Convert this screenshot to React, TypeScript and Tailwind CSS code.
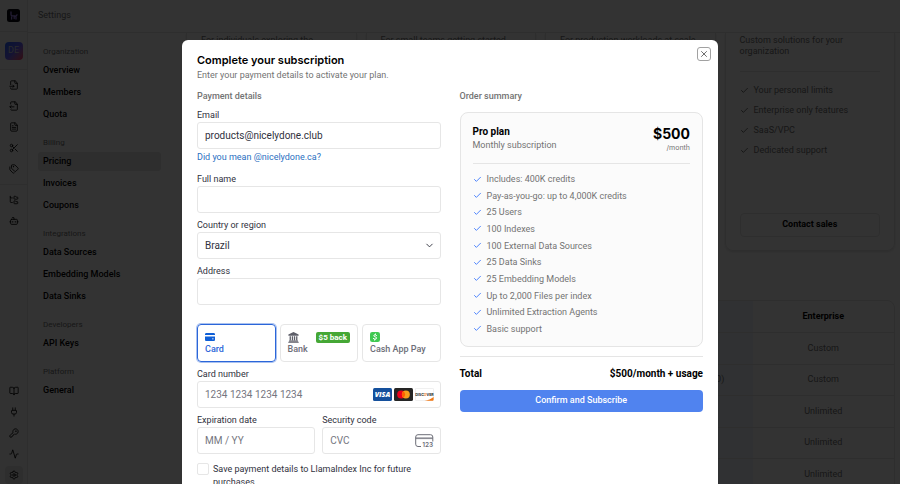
import type { ReactNode } from "react";
import {
  Activity,
  BookOpen,
  Bot,
  Check,
  ChevronDown,
  FileInput,
  FileOutput,
  FileText,
  FolderTree,
  KeyRound,
  Plug,
  Scissors,
  Settings,
  Tags,
  X,
} from "lucide-react";
import type { LucideIcon } from "lucide-react";

const railGroups: { name: string; icon: LucideIcon }[][] = [
  [
    { name: "Parse", icon: FileInput },
    { name: "Extract", icon: FileOutput },
    { name: "Classify", icon: FileText },
    { name: "Split", icon: Scissors },
    { name: "Tags", icon: Tags },
  ],
  [
    { name: "Index", icon: FolderTree },
    { name: "Agents", icon: Bot },
  ],
];

const railBottom: { name: string; icon: LucideIcon }[] = [
  { name: "Docs", icon: BookOpen },
  { name: "Integrations", icon: Plug },
  { name: "API keys", icon: KeyRound },
  { name: "Usage", icon: Activity },
  { name: "Settings", icon: Settings },
];

const menu = [
  { title: "Organization", items: ["Overview", "Members", "Quota"] },
  { title: "Billing", items: ["Pricing", "Invoices", "Coupons"] },
  { title: "Integrations", items: ["Data Sources", "Embedding Models", "Data Sinks"] },
  { title: "Developers", items: ["API Keys"] },
  { title: "Platform", items: ["General"] },
];

const plans = [
  { text: "For individuals exploring the platform", features: [] },
  { text: "For small teams getting started", features: [] },
  { text: "For production workloads at scale", features: [] },
  {
    text: "Custom solutions for your organization",
    features: ["Your personal limits", "Enterprise only features", "SaaS/VPC", "Dedicated support"],
  },
];

const compareRows = [
  ["", "Custom"],
  ["Pay-as-you-go ($500)", "Custom"],
  ["", "Unlimited"],
  ["", "Unlimited"],
  ["", "Unlimited"],
];

const orderFeatures = [
  "Includes: 400K credits",
  "Pay-as-you-go: up to 4,000K credits",
  "25 Users",
  "100 Indexes",
  "100 External Data Sources",
  "25 Data Sinks",
  "25 Embedding Models",
  "Up to 2,000 Files per index",
  "Unlimited Extraction Agents",
  "Basic support",
];

const inputClass =
  "block h-[27px] w-full rounded-[3px] border border-[#e6e6e6] bg-white px-[7px] text-[10px] text-[#30313d] placeholder:text-[#757680] outline-none";

const methodClass = "flex h-[38px] flex-col items-start rounded-[4px] border px-[7px] pt-[6px]";

const RailButton = ({ name, icon: Icon, active }: { name: string; icon: LucideIcon; active?: boolean }) => (
  <button
    aria-label={name}
    className={`flex h-[18px] w-[18px] items-center justify-center rounded-sm ${active ? "bg-neutral-200" : ""}`}
  >
    <Icon className="h-[10px] w-[10px]" strokeWidth={2} />
  </button>
);

const Rail = () => (
  <aside className="flex w-7 shrink-0 flex-col items-center border-r border-neutral-200 bg-neutral-50">
    <div className="flex h-8 w-full shrink-0 items-center justify-center border-b border-neutral-200">
      <svg viewBox="0 0 13 13" className="h-[13px] w-[13px]">
        <rect width="13" height="13" rx="2.5" fill="#05050f" />
        <path
          d="M4 3v2.6c0 .8.4 1.2 1.2 1.2h2.6c.8 0 1.2.4 1.2 1.2v2M4.6 6.5V10M7.2 7v2.6M8.8 7.4 10 5.8"
          fill="none"
          stroke="#a78bfa"
          strokeWidth="1.3"
          strokeLinecap="round"
        />
      </svg>
    </div>
    <div className="flex h-[38px] w-full shrink-0 items-center justify-center border-b border-neutral-200">
      <div className="flex h-[18px] w-[18px] items-center justify-center rounded bg-linear-to-br from-blue-600 via-indigo-500 to-rose-500 text-[9px] text-neutral-300">
        DE
      </div>
    </div>
    {railGroups.map((group, i) => (
      <div key={i} className={`flex w-full flex-col items-center gap-[3px] py-[6px] ${i === 0 ? "border-b border-neutral-200" : ""}`}>
        {group.map((item) => (
          <RailButton key={item.name} {...item} />
        ))}
      </div>
    ))}
    <nav className="mt-auto flex flex-col gap-[3px]">
      {railBottom.map((item) => (
        <RailButton key={item.name} {...item} active={item.name === "Settings"} />
      ))}
    </nav>
  </aside>
);

const SettingsMenu = () => (
  <nav className="flex w-[143px] shrink-0 flex-col gap-[11px] px-[10px] pt-[11px]">
    {menu.map((section) => (
      <div key={section.title}>
        <h3 className="h-[17px] px-[5px] text-[8px] leading-4 text-neutral-500">{section.title}</h3>
        <ul className="grid gap-[3px]">
          {section.items.map((item) => (
            <li key={item}>
              <a
                href="#"
                className={`block h-[19px] w-[123px] rounded-[3px] px-[5px] text-[9px] leading-[19px] font-medium ${
                  item === "Pricing" ? "bg-neutral-200" : ""
                }`}
              >
                {item}
              </a>
            </li>
          ))}
        </ul>
      </div>
    ))}
  </nav>
);

const PricingPage = () => (
  <main className="flex min-w-0 flex-1 flex-col gap-[49px] overflow-hidden pr-[5px] pl-[15px]">
    <div className="grid shrink-0 grid-cols-4 gap-[9px]">
      {plans.map((plan) => (
        <section
          key={plan.text}
          className="flex h-[218px] flex-col rounded-b-lg border border-t-0 border-neutral-200 px-[14px] pt-[2px] pb-[13px] shadow-sm"
        >
          <p className="h-[23px] text-[9px] leading-[11px] text-neutral-500">{plan.text}</p>
          <hr className="mt-[13px] border-neutral-200" />
          <ul className="mt-[12px] grid gap-2">
            {plan.features.map((feature) => (
              <li key={feature} className="flex h-3 items-center gap-[5px] text-[9px] leading-3 text-neutral-500">
                <Check className="h-[9px] w-[9px] text-neutral-700" />
                {feature}
              </li>
            ))}
          </ul>
          {plan.features.length > 0 && (
            <button className="mt-auto h-6 rounded-[4px] border border-neutral-200 text-[9px] font-bold">
              Contact sales
            </button>
          )}
        </section>
      ))}
    </div>
    <div className="shrink-0 rounded-lg border border-neutral-200">
      <table className="h-[190px] w-full table-fixed text-center text-[9px] text-neutral-500">
        <tbody>
          <tr className="h-[31px] border-b border-neutral-200 text-black">
            <td />
            <td />
            <td />
            <td className="bg-blue-50" />
            <th scope="col" className="font-bold">
              Enterprise
            </th>
          </tr>
          {compareRows.map(([pro, enterprise], i) => (
            <tr key={i} className="h-[31px] border-b border-neutral-200">
              <td />
              <td />
              <td />
              <td className="bg-blue-50">{pro}</td>
              <td>{enterprise}</td>
            </tr>
          ))}
        </tbody>
      </table>
    </div>
  </main>
);

const Field = ({ id, label, children }: { id: string; label: string; children: ReactNode }) => (
  <div className="min-w-0">
    <label htmlFor={id} className="mb-px block text-[9px] leading-3 text-[#30313d]">
      {label}
    </label>
    <div className="relative">{children}</div>
  </div>
);

const CardIcon = () => (
  <svg viewBox="0 0 10 8" className="h-2 w-[10px]">
    <path d="M0 1.3C0 .6.6 0 1.3 0h7.4C9.4 0 10 .6 10 1.3V2H0zM0 3.4h10v3.3C10 7.4 9.4 8 8.7 8H1.3C.6 8 0 7.4 0 6.7z" fill="#0f5fd7" />
    <path d="M7 5.4h1.6v.8H7z" fill="#fff" />
  </svg>
);

const BankIcon = () => (
  <svg viewBox="0 0 11 11" className="h-[11px] w-[11px]" fill="#5d5e68">
    <path d="M5.5 0 10.6 2.6v1.2H.4V2.6z" />
    <path d="M1.6 4.3h1.3v4H1.6zM3.8 4.3h1.3v4H3.8zM5.9 4.3h1.3v4H5.9zM8.1 4.3h1.3v4H8.1zM1 8.6h9v.8H1zM.3 9.7h10.4v1H.3z" />
  </svg>
);

const CashIcon = () => (
  <svg viewBox="0 0 10 10" className="h-[10px] w-[10px]">
    <rect width="10" height="10" rx="2.2" fill="#3fc951" />
    <path
      d="M6.6 3.5C6.1 3 5.6 2.8 5.1 2.8c-.8 0-1.3.4-1.3.9 0 1.4 2.8.9 2.8 2.3 0 .7-.7 1.200-1.500 1.200-.7 0-1.300-.3-1.800-.8M5.400 1.900l-.2.9M4.900 7.300l-.2.9"
      fill="none"
      stroke="#fff"
      strokeWidth="1"
      strokeLinecap="round"
    />
  </svg>
);

const CardBrands = () => (
  <div className="pointer-events-none absolute inset-y-0 right-[7px] flex items-center gap-[2px]">
    <svg viewBox="0 0 24 16" className="h-[13px] w-[19px]" preserveAspectRatio="none">
      <rect width="24" height="16" rx="2" fill="#15509c" />
      <text x="12" y="11.2" textAnchor="middle" fontSize="9" fontWeight="800" fontStyle="italic" fontFamily="Open Sans, sans-serif" fill="#fff">
        VISA
      </text>
    </svg>
    <svg viewBox="0 0 24 16" className="h-[13px] w-[19px]" preserveAspectRatio="none">
      <rect width="24" height="16" rx="2" fill="#252525" />
      <circle cx="9" cy="8" r="5" fill="#eb001b" />
      <circle cx="15" cy="8" r="5" fill="#f79e1b" />
      <path d="M12 4a5 5 0 0 1 0 8 5 5 0 0 1 0-8z" fill="#ff5f00" />
    </svg>
    <svg viewBox="0 0 24 16" className="h-[13px] w-[19px]" preserveAspectRatio="none">
      <rect x=".4" y=".4" width="23.2" height="15.2" rx="1.6" fill="#fff" stroke="#e3e3e3" strokeWidth=".8" />
      <path d="M23.5 11V14c0 1-.6 1.6-1.6 1.6H12C16.5 15 20.500 13.400 23.500 11z" fill="#f27712" />
      <text x="12" y="9.3" textAnchor="middle" fontSize="4.5" fontWeight="700" fontFamily="Inter, sans-serif" fill="#201d1c">
        DISC<tspan fill="#f27712">O</tspan>VER
      </text>
    </svg>
  </div>
);

const CvcIcon = () => (
  <svg viewBox="0 0 19 14" className="pointer-events-none absolute top-[7px] right-[7px] h-[14px] w-[19px]">
    <path
      d="M6 12.5H3A2.3 2.3 0 0 1 .7 10.2V3A2.3 2.3 0 0 1 3 .7h12.5A2.3 2.3 0 0 1 17.800 3v4.500"
      fill="none"
      stroke="#6d6e78"
      strokeWidth="1"
    />
    <path d="M.7 3.4h17.1v1.7H.7z" fill="#6d6e78" opacity=".8" />
    <text x="7.3" y="13.2" fontSize="6.5" fontWeight="600" fontFamily="Inter, sans-serif" fill="#6d6e78">
      123
    </text>
  </svg>
);

const PaymentForm = () => (
  <form className="min-w-0">
    <h3 className="mb-[7px] text-[9px] leading-3 font-medium text-neutral-500">Payment details</h3>
    <Field id="email" label="Email">
      <input id="email" type="email" defaultValue="products@nicelydone.club" className={inputClass} />
    </Field>
    <a href="#" className="mt-[2px] mb-[10px] block text-[9px] leading-3 text-[#2b6fbf]">
      Did you mean @nicelydone.ca?
    </a>
    <div className="grid gap-[6px]">
      <Field id="name" label="Full name">
        <input id="name" className={inputClass} />
      </Field>
      <Field id="country" label="Country or region">
        <select id="country" className={`${inputClass} appearance-none`} defaultValue="Brazil">
          <option>Brazil</option>
        </select>
        <ChevronDown className="pointer-events-none absolute top-2 right-[6px] h-[11px] w-[11px] text-[#30313d]" />
      </Field>
      <Field id="address" label="Address">
        <input id="address" className={inputClass} />
      </Field>
    </div>
    <div className="mt-[19px] mb-[6px] grid grid-cols-3 gap-1 text-[9px] leading-3 font-medium text-[#6d6e78]">
      <button type="button" className={`${methodClass} border-[#2b66d9] text-[#2b66d9] ring-1 ring-[#2b66d9]/40`}>
        <span className="flex h-3 items-center">
          <CardIcon />
        </span>
        Card
      </button>
      <button type="button" className={`${methodClass} border-[#e6e6e6]`}>
        <span className="flex h-3 w-full items-center justify-between">
          <BankIcon />
          <span className="rounded-[2px] bg-[#45a735] px-[3px] text-[8px] leading-[11px] font-bold text-white">$5 back</span>
        </span>
        Bank
      </button>
      <button type="button" className={`${methodClass} border-[#e6e6e6]`}>
        <span className="flex h-3 items-center">
          <CashIcon />
        </span>
        Cash App Pay
      </button>
    </div>
    <div className="grid grid-cols-2 gap-x-[7px] gap-y-[6px]">
      <div className="col-span-2">
        <Field id="card" label="Card number">
          <input id="card" placeholder="1234 1234 1234 1234" className={inputClass} />
          <CardBrands />
        </Field>
      </div>
      <Field id="expiry" label="Expiration date">
        <input id="expiry" placeholder="MM / YY" className={inputClass} />
      </Field>
      <Field id="cvc" label="Security code">
        <input id="cvc" placeholder="CVC" className={inputClass} />
        <CvcIcon />
      </Field>
    </div>
    <label className="mt-[9px] flex gap-1 text-[9px] leading-[13px] text-[#30313d]">
      <input
        type="checkbox"
        className="h-[12px] w-[12px] shrink-0 appearance-none rounded-[2px] border border-[#e6e6e6] bg-white"
      />
      Save payment details to LlamaIndex Inc for future purchases.
    </label>
  </form>
);

const OrderSummary = () => (
  <section className="min-w-0">
    <h3 className="mb-[10px] text-[9px] leading-3 font-medium text-neutral-500">Order summary</h3>
    <div className="rounded-lg border border-neutral-200 bg-[#fbfbfb] px-3 pt-[11px] pb-[11px]">
      <div className="flex justify-between border-b border-neutral-200 pb-[10px]">
        <div className="pt-px">
          <h4 className="text-[10px] leading-[14px] font-bold text-black">Pro plan</h4>
          <p className="text-[9px] leading-3 text-neutral-500">Monthly subscription</p>
        </div>
        <div className="text-right">
          <p className="font-['Inter',sans-serif] text-sm leading-[19px] font-bold text-black">$500</p>
          <p className="font-['Inter',sans-serif] text-[7px] leading-[10px] text-neutral-500">/month</p>
        </div>
      </div>
      <ul className="mt-[9px] flex h-[162px] flex-col justify-between">
        {orderFeatures.map((feature) => (
          <li key={feature} className="flex items-center gap-[5px] text-[9px] leading-3 text-neutral-500">
            <Check className="h-[9px] w-[9px] text-blue-600" />
            {feature}
          </li>
        ))}
      </ul>
    </div>
    <div className="mt-[9px] flex justify-between border-t border-neutral-200 pt-[10px] text-[10px] leading-[14px] font-bold text-black">
      <span>Total</span>
      <span>$500/month + usage</span>
    </div>
    <button className="mt-[9px] h-[22px] w-full rounded-[4px] bg-[#5083ef] text-[9px] font-medium text-white">
      Confirm and Subscribe
    </button>
  </section>
);

const SubscribeDialog = () => (
  <div className="fixed inset-0 overflow-hidden bg-black/80 pt-10">
    <div
      role="dialog"
      aria-labelledby="dialog-title"
      className="relative mx-auto w-full max-w-[536px] rounded-md bg-white px-[15px] pt-[13px] pb-4"
    >
      <h2 id="dialog-title" className="font-['Inter',sans-serif] text-[11px] leading-[14px] font-semibold text-black">
        Complete your subscription
      </h2>
      <p className="mt-[2px] text-[9px] leading-3 text-neutral-500">Enter your payment details to activate your plan.</p>
      <button
        aria-label="Close"
        className="absolute top-[7px] right-[7px] flex h-[14px] w-[14px] items-center justify-center rounded-[3px] border border-neutral-400 text-neutral-600"
      >
        <X className="h-[10px] w-[10px]" />
      </button>
      <div className="mt-[9px] grid grid-cols-2 gap-[19px]">
        <PaymentForm />
        <OrderSummary />
      </div>
    </div>
  </div>
);

export default function App() {
  return (
    <div className="flex h-screen overflow-hidden bg-white font-['Roboto',sans-serif] text-black">
      <Rail />
      <div className="flex min-w-0 flex-1 flex-col">
        <header className="flex h-[33px] shrink-0 items-center border-b border-neutral-200 px-[10px] text-[9px] text-neutral-500">
          Settings
        </header>
        <div className="flex min-h-0 flex-1">
          <SettingsMenu />
          <PricingPage />
        </div>
      </div>
      <SubscribeDialog />
    </div>
  );
}
